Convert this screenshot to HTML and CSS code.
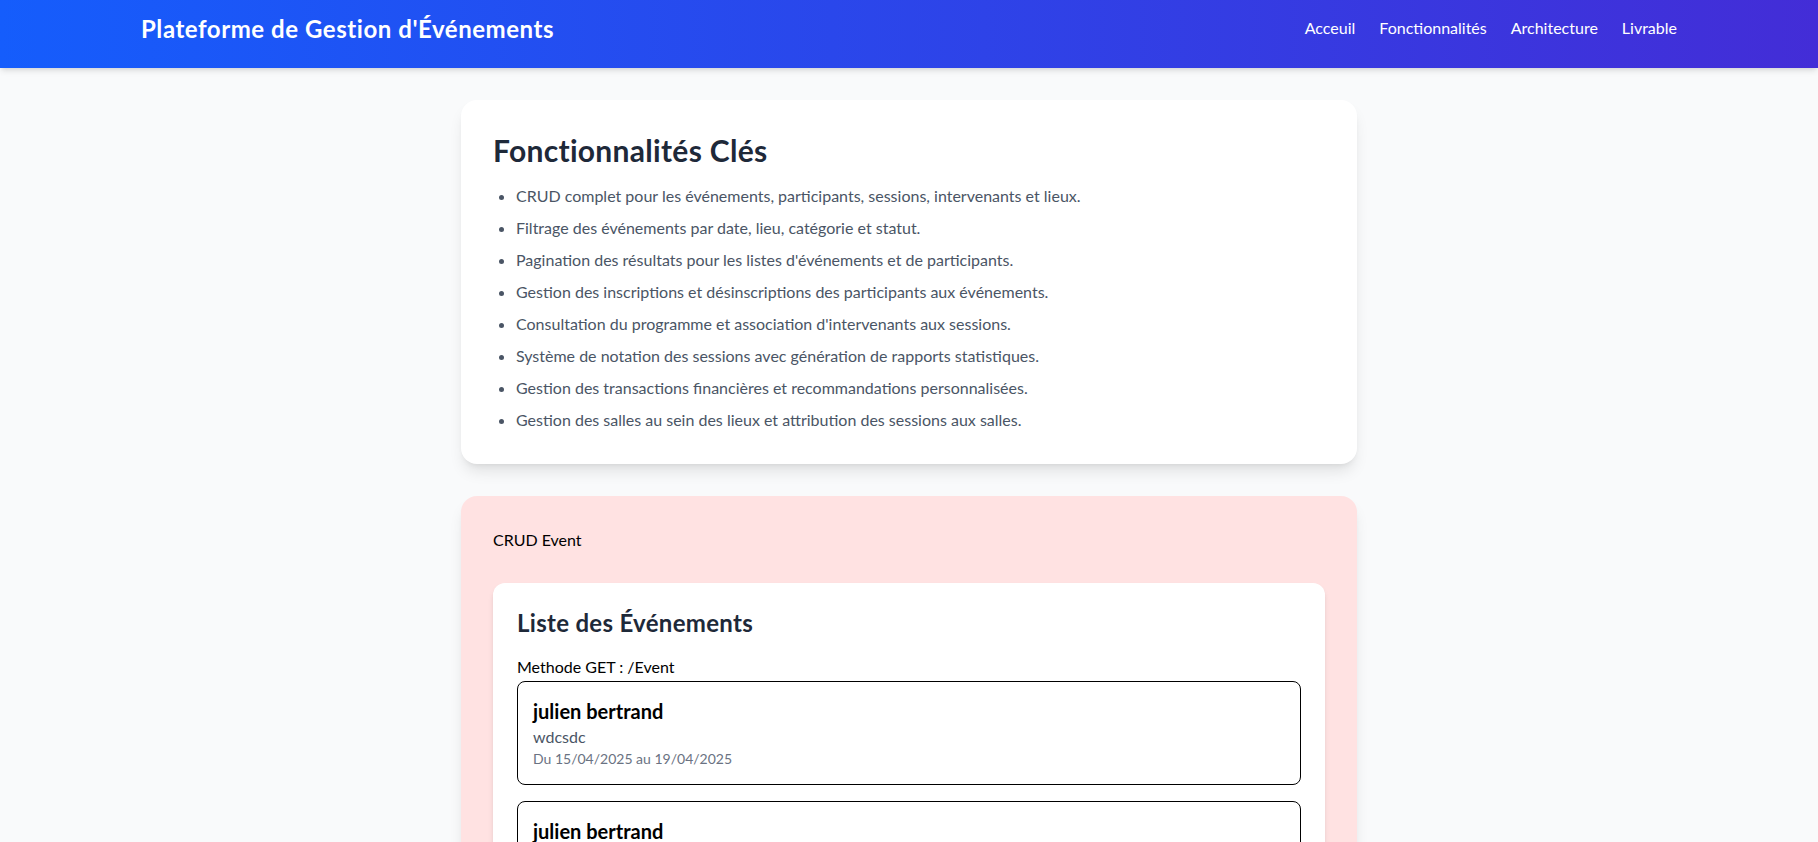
FILE: index.html
```html
<!DOCTYPE html>
<html lang="fr">
<head>
<meta charset="utf-8">
<title>Plateforme de Gestion d'Événements</title>
<link rel="stylesheet" href="styles.css">
</head>
<body>
<header class="topbar">
  <div class="container">
    <h1 class="brand">Plateforme de Gestion d'Événements</h1>
    <nav class="nav">
      <a href="#">Acceuil</a>
      <a href="#">Fonctionnalités</a>
      <a href="#">Architecture</a>
      <a href="#">Livrable</a>
    </nav>
  </div>
</header>
<main class="main">
  <div class="wrap">
    <section class="card">
      <h2 class="card-title">Fonctionnalités Clés</h2>
      <ul class="features">
        <li>CRUD complet pour les événements, participants, sessions, intervenants et lieux.</li>
        <li>Filtrage des événements par date, lieu, catégorie et statut.</li>
        <li>Pagination des résultats pour les listes d'événements et de participants.</li>
        <li>Gestion des inscriptions et désinscriptions des participants aux événements.</li>
        <li>Consultation du programme et association d'intervenants aux sessions.</li>
        <li>Système de notation des sessions avec génération de rapports statistiques.</li>
        <li>Gestion des transactions financières et recommandations personnalisées.</li>
        <li>Gestion des salles au sein des lieux et attribution des sessions aux salles.</li>
      </ul>
    </section>
    <section class="crud">
      <p class="crud-label">CRUD Event</p>
      <div class="panel">
        <h3 class="panel-title">Liste des Événements</h3>
        <p class="method">Methode GET : /Event</p>
        <div class="event">
          <h4 class="event-name">julien bertrand</h4>
          <p class="event-desc">wdcsdc</p>
          <p class="event-date">Du 15/04/2025 au 19/04/2025</p>
        </div>
        <div class="event">
          <h4 class="event-name">julien bertrand</h4>
          <p class="event-desc">wdcsdc</p>
          <p class="event-date">Du 15/04/2025 au 19/04/2025</p>
        </div>
      </div>
    </section>
  </div>
</main>
</body>
</html>
```
FILE: styles.css
```css
* { box-sizing: border-box; }
body {
  margin: 0;
  background: #f9fafb;
  font-family: Lato, "Liberation Sans", Arial, sans-serif;
  font-size: 16px;
  line-height: 24px;
  color: #000;
}
.topbar {
  background: linear-gradient(to right, #155dfc, #432dd7);
  box-shadow: 0 4px 6px -1px rgba(0,0,0,0.1), 0 2px 4px -2px rgba(0,0,0,0.1);
  color: #fff;
}
.container {
  width: 1536px;
  margin: 0 auto;
  display: flex;
  justify-content: space-between;
  align-items: center;
  padding: 13px 0 23px;
}
.brand {
  margin: 0;
  font-size: 24px;
  line-height: 32px;
  font-weight: 700;
  letter-spacing: 0.55px;
}
.nav { display: flex; gap: 24px; margin-top: -2px; }
.nav a { color: #fff; text-decoration: none; }
.main { padding: 32px 0; }
.wrap {
  width: 896px;
  margin: 0 auto;
  display: flex;
  flex-direction: column;
  gap: 32px;
}
.card {
  background: #fff;
  border-radius: 16px;
  padding: 32px;
  box-shadow: 0 10px 15px -3px rgba(0,0,0,0.1), 0 4px 6px -4px rgba(0,0,0,0.1);
}
.card-title {
  margin: 0 0 16px;
  font-size: 30px;
  line-height: 36px;
  font-weight: 700;
  color: #1e2939;
  letter-spacing: 0.3px;
}
.features {
  margin: 0;
  padding-left: 23px;
  list-style: disc;
  color: #4a5565;
}
.features li + li { margin-top: 8px; }
.crud {
  background: #ffe2e2;
  border-radius: 16px;
  padding: 32px;
  box-shadow: 0 10px 15px -3px rgba(0,0,0,0.1), 0 4px 6px -4px rgba(0,0,0,0.1);
}
.crud-label { margin: 0 0 31px; }
.panel {
  background: #fff;
  border-radius: 12px;
  padding: 24px;
  box-shadow: 0 4px 6px -1px rgba(0,0,0,0.1), 0 2px 4px -2px rgba(0,0,0,0.1);
}
.panel-title {
  margin: 0 0 16px;
  font-size: 24px;
  line-height: 32px;
  font-weight: 700;
  color: #1e2939;
  letter-spacing: 0.3px;
}
.method { margin: 0 0 2px; }
.event {
  border: 1px solid #000;
  border-radius: 8px;
  padding: 15px;
  margin-bottom: 16px;
}
.event-name {
  margin: 0;
  font-size: 20px;
  line-height: 28px;
  font-weight: 700;
}
.event-desc { margin: 0; color: #4a5565; }
.event-date { margin: 0; font-size: 14px; line-height: 20px; color: #6a7282; }
```
